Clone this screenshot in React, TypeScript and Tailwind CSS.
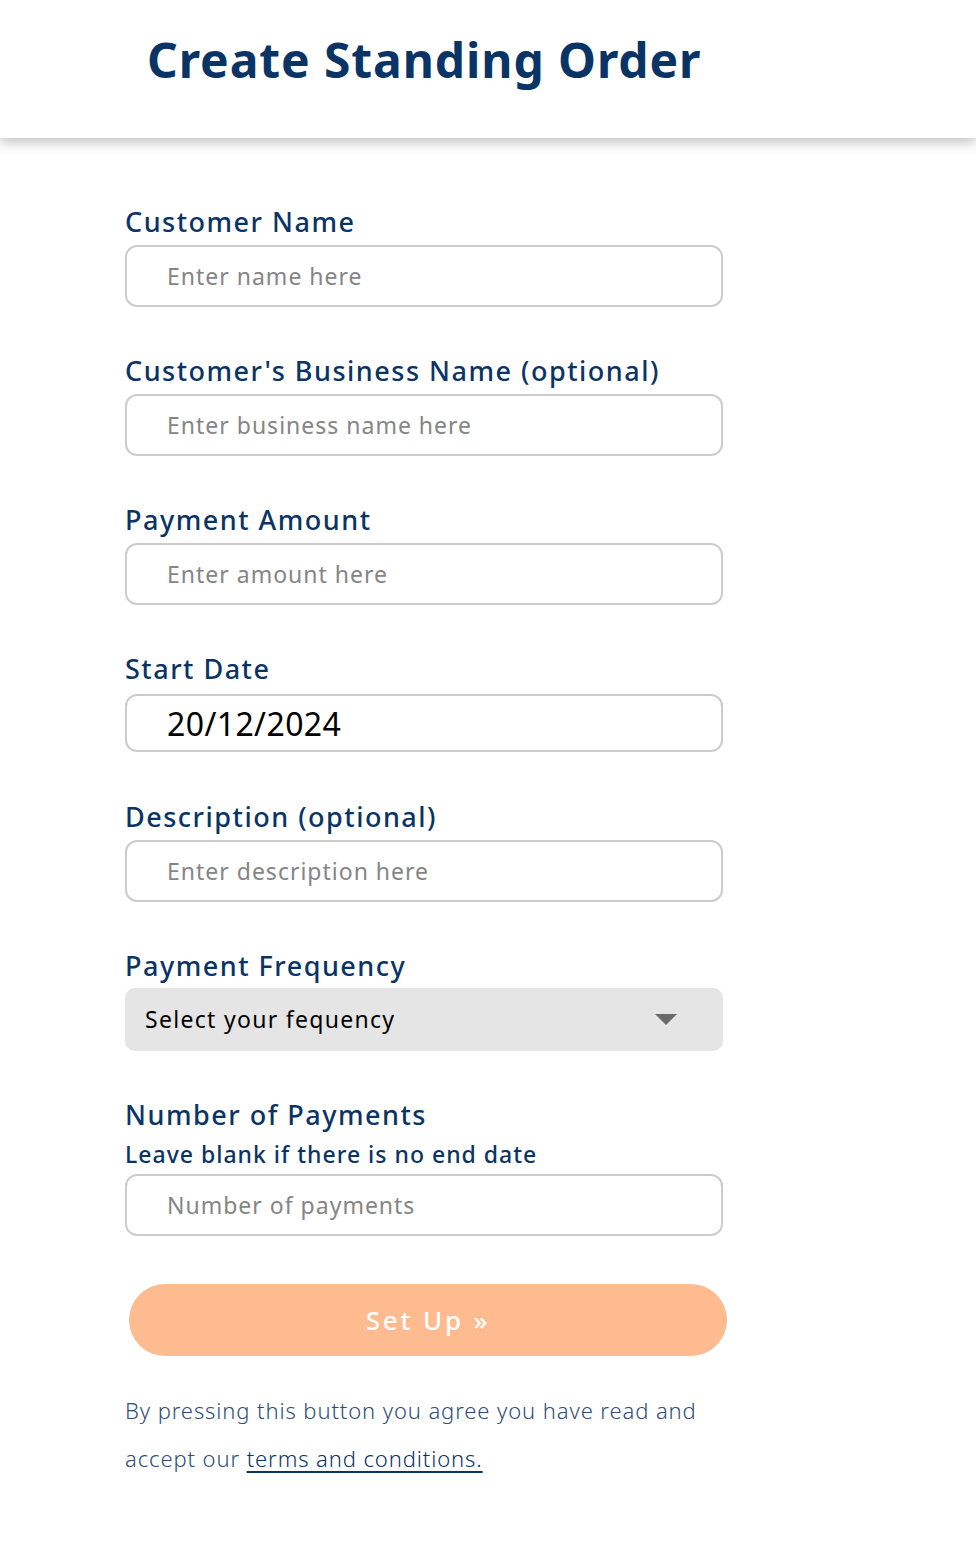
const NAVY = 'text-[#0b3466]'
const LABEL = `block text-[27px] leading-[36px] font-medium tracking-[1.5px] ${NAVY}`
const INPUT =
  'h-[62px] w-[598px] rounded-[12px] border-2 border-[#cccccc] bg-white pl-[40px] text-[23px] tracking-[1px] text-black placeholder:text-[#858585] focus:outline-none'

function Field({
  label,
  placeholder,
}: {
  label: string
  placeholder: string
}) {
  return (
    <div className="mb-[46px]">
      <label className={LABEL}>{label}</label>
      <input type="text" placeholder={placeholder} className={`mt-[5px] ${INPUT}`} />
    </div>
  )
}

export default function App() {
  return (
    <div className="min-h-[1542px] bg-white font-['Noto_Sans',sans-serif]">
      <header className="relative z-10 h-[138px] bg-white shadow-[0_4px_12px_rgba(0,0,0,0.25)]">
        <h1 className={`pl-[147px] pt-[28px] text-[48px] leading-[64px] font-bold tracking-[0.9px] ${NAVY}`}>
          Create Standing Order
        </h1>
      </header>

      <main className="pl-[125px] pt-[66px]">
        <Field label="Customer Name" placeholder="Enter name here" />
        <Field
          label="Customer's Business Name (optional)"
          placeholder="Enter business name here"
        />
        <Field label="Payment Amount" placeholder="Enter amount here" />

        <div className="mb-[47px]">
          <label className={LABEL}>Start Date</label>
          <input
            type="text"
            defaultValue="20/12/2024"
            className="mt-[7px] h-[58px] w-[598px] rounded-[12px] border-2 border-[#cccccc] bg-white pl-[40px] text-[32px] tracking-[0.4px] text-black focus:outline-none"
          />
        </div>

        <Field label="Description (optional)" placeholder="Enter description here" />

        <div className="mb-[46px]">
          <label className={LABEL}>Payment Frequency</label>
          <div className="mt-[4px] flex h-[63px] w-[598px] items-center justify-between rounded-[10px] bg-[#e5e5e5] pl-[20px] pr-[46px]">
            <span className="text-[23px] tracking-[1.3px] text-black">Select your fequency</span>
            <svg width="22" height="12" viewBox="0 0 22 12">
              <path d="M0 0h22L11 11z" fill="#6b6b6b" />
            </svg>
          </div>
        </div>

        <div>
          <label className={LABEL}>Number of Payments</label>
          <p className={`mt-[3px] text-[23px] leading-[36px] font-medium tracking-[1px] ${NAVY}`}>
            Leave blank if there is no end date
          </p>
          <input type="text" placeholder="Number of payments" className={`mt-[2px] ${INPUT}`} />
        </div>

        <button
          type="button"
          className="ml-[4px] mt-[48px] h-[72px] w-[598px] rounded-[36px] bg-[#fdbb8f] text-[26px] font-medium tracking-[2.8px] text-white"
        >
          Set Up »
        </button>

        <p className="mt-[30px] w-[592px] text-[22px] leading-[48px] font-light tracking-[0.9px] text-[#2d4e7a]">
          By pressing this button you agree you have read and accept our{' '}
          <a href="#" className="text-[#0b3466] underline underline-offset-4">
            terms and conditions.
          </a>
        </p>
      </main>
    </div>
  )
}
